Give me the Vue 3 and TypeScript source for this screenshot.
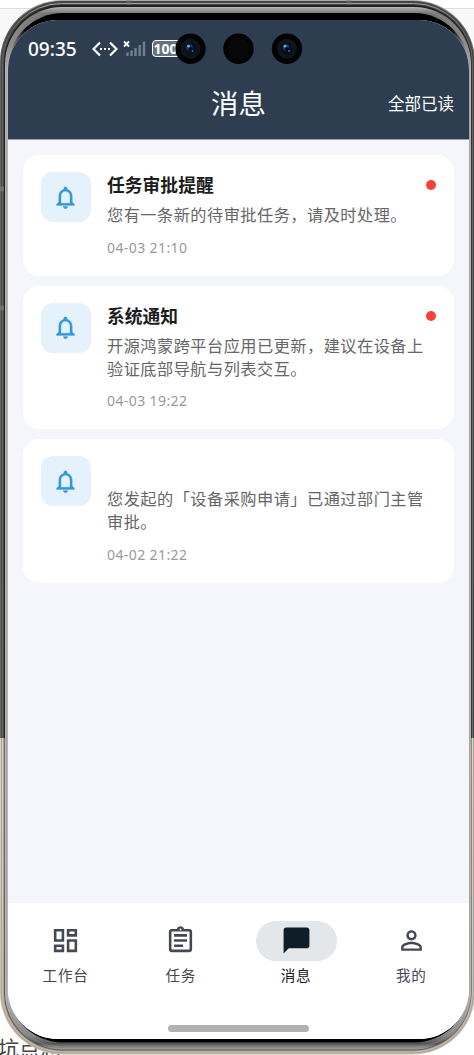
<script setup lang="ts">
interface Message {
  title: string
  lines: string[]
  time: string
  unread: boolean
}
interface Tab {
  label: string
  icon: string
  active?: boolean
}

const messages: Message[] = [
  { title: '任务审批提醒', lines: ['您有一条新的待审批任务，请及时处理。'], time: '04-03 21:10', unread: true },
  { title: '系统通知', lines: ['开源鸿蒙跨平台应用已更新，建议在设备上', '验证底部导航与列表交互。'], time: '04-03 19:22', unread: true },
  { title: '', lines: ['您发起的「设备采购申请」已通过部门主管', '审批。'], time: '04-02 21:22', unread: false },
]

const tabs: Tab[] = [
  { label: '工作台', icon: 'M19 5v2h-4V5h4M9 5v6H5V5h4m10 8v6h-4v-6h4M9 17v2H5v-2h4M21 3h-8v6h8V3zM11 3H3v10h8V3zm10 8h-8v10h8V11zm-10 4H3v6h8v-6z' },
  { label: '任务', icon: 'M7 15h7v2H7zm0-4h10v2H7zm0-4h10v2H7zm12-4h-4.18C14.4 1.84 13.3 1 12 1c-1.3 0-2.4.84-2.82 2H5c-1.1 0-2 .9-2 2v14c0 1.1.9 2 2 2h14c1.1 0 2-.9 2-2V5c0-1.1-.9-2-2-2zm-7-.25c.41 0 .75.34.75.75s-.34.75-.75.75-.75-.34-.75-.75.34-.75.75-.75zM19 19H5V5h14v14z' },
  { label: '消息', icon: 'M20 2H4c-1.1 0-1.99.9-1.99 2L2 22l4-4h14c1.1 0 2-.9 2-2V4c0-1.1-.9-2-2-2z', active: true },
  { label: '我的', icon: 'M12 5.9c1.16 0 2.1.94 2.1 2.1s-.94 2.1-2.1 2.1S9.9 9.16 9.9 8s.94-2.1 2.1-2.1m0 9c2.97 0 6.1 1.46 6.1 2.1v1.1H5.9V17c0-.64 3.13-2.1 6.1-2.1M12 4C9.79 4 8 5.79 8 8s1.79 4 4 4 4-1.79 4-4-1.79-4-4-4zm0 9c-2.67 0-8 1.34-8 4v3h16v-3c0-2.66-5.33-4-8-4z' },
]
const bell = 'M12 22c1.1 0 2-.9 2-2h-4c0 1.1.9 2 2 2zm6-6v-5c0-3.07-1.63-5.64-4.5-6.32V4c0-.83-.67-1.5-1.5-1.5s-1.5.67-1.5 1.5v.68C7.64 5.36 6 7.92 6 11v5l-2 2v1h16v-1l-2-2zm-2 1H8v-6c0-2.48 1.51-4.5 4-4.5s4 2.02 4 4.5v6z'
const cameras = [190.5, 238.5, 287]
</script>

<template>
  <div class="stage">
    <div class="page-top"></div>
    <div class="page-text">坑点总</div>

    <svg class="frame" width="474" height="1055" viewBox="0 0 474 1055">
      <defs>
        <linearGradient id="body" gradientUnits="userSpaceOnUse" x1="0" y1="0" x2="0" y2="1055">
          <stop offset="0" stop-color="#454442" />
          <stop offset="0.6995" stop-color="#454442" />
          <stop offset="0.6995" stop-color="#aaa298" />
          <stop offset="1" stop-color="#aaa298" />
        </linearGradient>
        <linearGradient id="rim" gradientUnits="userSpaceOnUse" x1="0" y1="0" x2="0" y2="1055">
          <stop offset="0" stop-color="#a8aba6" />
          <stop offset="0.03" stop-color="#666" />
          <stop offset="0.6995" stop-color="#6c6b69" />
          <stop offset="0.6995" stop-color="#ded4c5" />
          <stop offset="1" stop-color="#c7bdad" />
        </linearGradient>
        <linearGradient id="groove" gradientUnits="userSpaceOnUse" x1="0" y1="0" x2="0" y2="1055">
          <stop offset="0" stop-color="#222120" />
          <stop offset="0.6995" stop-color="#222120" />
          <stop offset="0.6995" stop-color="#786f66" />
          <stop offset="1" stop-color="#5c554d" />
        </linearGradient>
        <linearGradient id="chrome" gradientUnits="userSpaceOnUse" x1="0" y1="6" x2="0" y2="1051">
          <stop offset="0" stop-color="#c4c4c4" />
          <stop offset="0.007" stop-color="#777" />
          <stop offset="0.035" stop-color="#8a8a8a" />
          <stop offset="0.06" stop-color="#b6b6b6" />
          <stop offset="0.95" stop-color="#b6b6b6" />
          <stop offset="0.985" stop-color="#888" />
          <stop offset="0.993" stop-color="#555" />
          <stop offset="0.999" stop-color="#aaa" />
          <stop offset="1" stop-color="#aaa" />
        </linearGradient>
        <linearGradient id="bezel" gradientUnits="userSpaceOnUse" x1="8" y1="0" x2="469" y2="0">
          <stop offset="0" stop-color="#b0b0b0" />
          <stop offset="0.012" stop-color="#777" />
          <stop offset="0.04" stop-color="#000" />
          <stop offset="0.96" stop-color="#000" />
          <stop offset="0.988" stop-color="#777" />
          <stop offset="1" stop-color="#b0b0b0" />
        </linearGradient>
      </defs>
      <rect x="0" y="0" width="475" height="1054.5" rx="62" fill="url(#rim)" />
      <rect x="1" y="1" width="473" height="1052.5" rx="61" fill="url(#body)" />
      <rect x="2.5" y="3.5" width="470" height="1048.5" rx="59" fill="none" stroke="url(#rim)" />
      <rect x="4" y="5" width="467.5" height="1045.5" rx="58" fill="url(#groove)" />
      <rect x="5" y="7" width="466" height="1042.5" rx="57" fill="url(#chrome)" />
      <rect x="6.5" y="9" width="463" height="1038" rx="55" fill="none" stroke="#929292" stroke-width="1" opacity=".5" />
      <rect x="8" y="13" width="461" height="1029.5" rx="55" fill="url(#bezel)" />
      <path d="M129 0v5M349 0v5" stroke="#777" stroke-width="5" opacity=".5" />
      <path d="M0 189h4M0 308h4" stroke="#888" stroke-width="5" opacity=".5" />
    </svg>

    <main class="screen">
      <header class="header">
        <div class="status">
          <span class="clock">09:35</span>
          <svg class="net" width="26" height="16" viewBox="0 0 26 16">
            <path d="M8 1.5 1.5 8 8 14.5M18 1.5 24.5 8 18 14.5" fill="none" stroke="#fff" stroke-width="2.2" />
            <path d="M8 7h2v2H8zm4 0h2v2h-2zm4 0h2v2h-2z" fill="#fff" />
          </svg>
          <svg class="signal" width="23" height="17" viewBox="0 0 23 17">
            <path d="M1 1.5 6 6.5M6 1.5 1 6.5" stroke="#fff" stroke-width="1.8" />
            <path d="M4.5 12.5V16M8.5 10.5V16M12.5 8V16M16.7 5V16M21 1.5V16" stroke="#718091" stroke-width="2.4" />
          </svg>
          <span class="battery">100</span>
        </div>
        <div class="title-row">
          <h1>消息</h1>
          <span class="read-all">全部已读</span>
        </div>
      </header>

      <section class="list">
        <article v-for="m in messages" :key="m.time" class="card">
          <div class="badge">
            <svg width="27" height="27" viewBox="0 0 24 24"><path :d="bell" fill="#3498db" stroke="#3498db" stroke-width=".25" /></svg>
          </div>
          <div class="content">
            <div class="card-head">
              <h2>{{ m.title }}</h2>
              <i v-if="m.unread" class="dot"></i>
            </div>
            <p v-for="line in m.lines" :key="line">{{ line }}</p>
            <time>{{ m.time }}</time>
          </div>
        </article>
      </section>

      <nav class="tabs">
        <div v-for="t in tabs" :key="t.label" class="tab" :class="{ active: t.active }">
          <span class="pill">
            <svg width="31" height="31" viewBox="0 0 24 24"><path :d="t.icon" fill="currentColor" /></svg>
          </span>
          <span class="label">{{ t.label }}</span>
        </div>
      </nav>
      <div class="home-bar"></div>
    </main>

    <svg class="cameras" width="474" height="80" viewBox="0 0 474 80">
      <g v-for="(x, i) in cameras" :key="x">
        <circle :cx="x" cy="48.7" r="15.2" fill="#030303" />
        <template v-if="i !== 1">
          <circle :cx="x" cy="48.7" r="10" fill="#10141b" />
          <circle :cx="x" cy="48.7" r="6" fill="#07101f" />
          <circle :cx="x - 1" cy="47.5" r="3.2" fill="#183e65" />
          <circle :cx="x" cy="49" r="2" fill="#05080f" />
          <circle :cx="x - 2" cy="46.2" r="1.4" fill="#6aa5d5" />
          <circle :cx="x + 2" cy="51" r="1" fill="#2f6ba5" />
        </template>
        <circle v-else :cx="x" cy="48.7" r="11" fill="#080808" />
      </g>
    </svg>
  </div>
</template>

<style>
body {
  background: #fff;
  overflow: hidden;
}
</style>

<style scoped>
.stage {
  position: relative;
  width: 474px;
  height: 1055px;
  overflow: hidden;
  background: #fff;
  font-family: "Noto Sans", "Noto Sans CJK SC", sans-serif;
}
.page-top {
  position: absolute;
  inset: 8px 0 auto;
  height: 130px;
  border-top: 1px solid #ddd;
  background: #f8f8f8;
}
.page-text {
  position: absolute;
  left: -2px;
  top: 1032px;
  font: 21px/30px "Noto Sans CJK SC", sans-serif;
  color: #444;
  white-space: nowrap;
}
.frame,
.cameras {
  position: absolute;
  left: 0;
  top: 0;
}
.screen {
  position: absolute;
  left: 8px;
  top: 20px;
  width: 461px;
  height: 1019px;
  border-radius: 50px;
  overflow: hidden;
  background: #f5f6fb;
  display: flex;
  flex-direction: column;
}
.header {
  height: 119px;
  flex: none;
  background: #2e3e50;
  border-bottom: 1px solid #9ba2ac;
  color: #fff;
}
.status {
  display: flex;
  align-items: center;
  height: 57px;
  padding-left: 20px;
}
.clock {
  width: 63.5px;
  font-size: 19px;
  font-weight: 500;
  line-height: 26px;
}
.signal {
  margin-left: 5px;
}
.battery {
  margin-left: 6px;
  width: 32px;
  height: 17px;
  box-sizing: border-box;
  border: 1.5px solid #fff;
  border-radius: 4px;
  background: #66727f;
  font-size: 14px;
  font-weight: 700;
  line-height: 15px;
  padding-left: 1px;
}
.title-row {
  position: relative;
  display: flex;
  align-items: center;
  justify-content: center;
  height: 50px;
}
h1,
h2,
p {
  margin: 0;
}
h1 {
  font: 400 27.4px/40px "Noto Sans CJK SC", sans-serif;
}
.read-all {
  position: absolute;
  right: 15px;
  top: 14px;
  font: 400 16.5px/24px "Noto Sans CJK SC", sans-serif;
}
.list {
  flex: 1;
  padding: 15px 15px 0;
  display: flex;
  flex-direction: column;
  gap: 10px;
}
.card {
  display: flex;
  gap: 16px;
  padding: 17px 18px;
  border-radius: 16px;
  background: #fff;
}
.badge {
  flex: none;
  width: 50px;
  height: 50px;
  border-radius: 12px;
  background: #e5f1fb;
  display: flex;
  align-items: center;
  justify-content: center;
}
.badge svg {
  margin-right: 1px;
}
.content {
  flex: 1;
}
.card-head {
  display: flex;
  align-items: center;
  justify-content: space-between;
  height: 25px;
  margin-bottom: 6px;
}
h2 {
  font: 700 17.8px/25px "Noto Sans CJK SC", sans-serif;
  color: #1c1c1c;
}
.dot {
  width: 10px;
  height: 10px;
  margin-top: 1px;
  border-radius: 50%;
  background: #f44336;
}
p {
  font: 400 16.2px/22.8px "Noto Sans CJK SC", sans-serif;
  letter-spacing: 0.48px;
  white-space: nowrap;
  color: #666;
}
time {
  display: block;
  margin-top: 12px;
  margin-bottom: 1px;
  font-size: 14px;
  line-height: 20px;
  letter-spacing: 0.4px;
  color: #999;
}
.tabs {
  flex: none;
  height: 136px;
  box-sizing: border-box;
  padding-top: 17.5px;
  display: grid;
  grid-template-columns: repeat(4, 1fr);
  background: #fff;
}
.tab {
  display: flex;
  flex-direction: column;
  align-items: center;
  color: #444850;
}
.pill {
  width: 81px;
  height: 40px;
  border-radius: 20px;
  display: flex;
  align-items: center;
  justify-content: center;
}
.active .pill {
  background: #e3e7ea;
  color: #0f1d28;
}
.label {
  margin-top: 3.5px;
  font: 400 14.6px/22px "Noto Sans CJK SC", sans-serif;
  letter-spacing: 0.8px;
}
.active .label {
  color: #1b1c1f;
}
.home-bar {
  position: absolute;
  left: 160px;
  bottom: 7px;
  width: 141px;
  height: 7px;
  border-radius: 4px;
  background: #b1b1b1;
}
</style>
